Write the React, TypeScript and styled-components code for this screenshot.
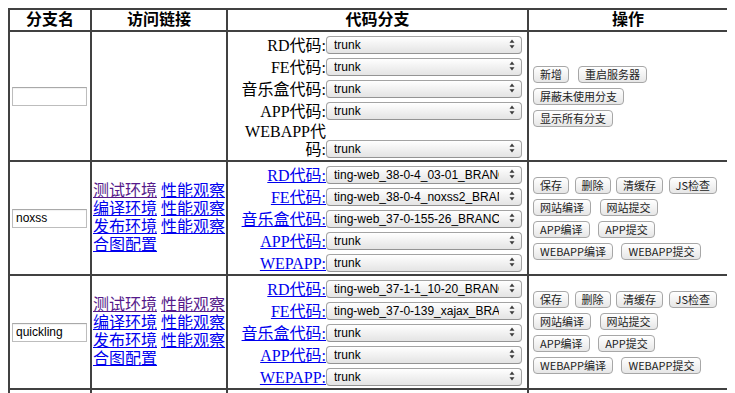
import React from "react";
import styled, { createGlobalStyle } from "styled-components";

const Global = createGlobalStyle`
  body {
    margin: 8px;
    background: #fff;
    color: #000;
    font-family: "Liberation Serif", "Noto Sans CJK SC", serif;
    font-size: 16px;
  }
`;

const Table = styled.table`
  width: 100%;
  border-collapse: collapse;
  table-layout: fixed;
`;

const Col = styled.col<{ $w: number }>`
  width: ${(p) => p.$w}px;
`;

const HeadCell = styled.th`
  border: 2px solid #414141;
  padding: 0;
  font-size: 16px;
  line-height: 20px;
  font-weight: bold;
  text-align: center;
`;

const Cell = styled.td`
  border: 2px solid #414141;
  padding: 1px 0;
  vertical-align: middle;
`;

const NameInput = styled.input`
  box-sizing: border-box;
  width: 75px;
  height: 19px;
  margin: 0 0 0 2px;
  padding: 0 3px;
  border: 1px solid #bdbdbd;
  border-top-color: #a9a9a9;
  box-shadow: inset 0 1px 1px rgba(0, 0, 0, 0.06);
  font: 12px "Liberation Sans", "Noto Sans CJK SC", sans-serif;
  color: #000;
  background: #fff;
  outline: none;
`;

const LinkList = styled.div`
  display: flex;
  flex-direction: column;
  padding-left: 1px;
  font-size: 16px;
  line-height: 18px;
  white-space: nowrap;
`;

const Link = styled.a<{ $visited?: boolean }>`
  color: ${(p) => (p.$visited ? "#551a8b" : "#0000ee")};
  text-decoration: underline;
`;

const Fields = styled.div`
  display: grid;
  grid-template-columns: 86px 196px;
  justify-content: end;
  align-items: end;
  padding-right: 5px;
`;

const FieldLabel = styled.div`
  text-align: right;
  font-size: 16px;
  line-height: 18px;
  padding: 2px 0 0;
`;

const SelectWrap = styled.div`
  position: relative;
  width: 196px;
  height: 18px;
  margin: 2px 0;
`;

const Select = styled.select`
  appearance: none;
  -webkit-appearance: none;
  box-sizing: border-box;
  width: 100%;
  height: 18px;
  margin: 0;
  padding: 0 22px 0 7px;
  border: 1px solid #a3a3a3;
  border-bottom-color: #949494;
  border-radius: 4px;
  background: linear-gradient(#ffffff, #f1f1f1 50%, #e4e4e4);
  font: 12px/16px "Liberation Sans", "Noto Sans CJK SC", sans-serif;
  color: #000;
  outline: none;
`;

const Arrows = styled.svg`
  position: absolute;
  right: 7px;
  top: 4px;
  pointer-events: none;
`;

const Actions = styled.div`
  display: flex;
  flex-direction: column;
  align-items: flex-start;
  gap: 5px;
  padding-left: 4px;
`;

const ActionRow = styled.div<{ $gap: number }>`
  display: flex;
  gap: ${(p) => p.$gap}px;
`;

const Btn = styled.button`
  box-sizing: border-box;
  height: 17px;
  margin: 0;
  padding: 0 6px;
  border: 1px solid #a7a7a7;
  border-radius: 4px;
  background: linear-gradient(#ffffff, #f3f3f3 50%, #e6e6e6);
  font: 11px/15px "Noto Sans CJK SC", sans-serif;
  color: #222;
  white-space: nowrap;
`;

type Field = { label: string; value: string };

const Dropdown: React.FC<{ value: string }> = ({ value }) => (
  <SelectWrap>
    <Select defaultValue={value}>
      <option value={value}>{value}</option>
      {value !== "trunk" && <option value="trunk">trunk</option>}
    </Select>
    <Arrows width="6" height="10" viewBox="0 0 6 10">
      <path d="M3 0.5 L5.5 3.8 L0.5 3.8 Z" fill="#3a3a3a" />
      <path d="M3 9.5 L5.5 6.2 L0.5 6.2 Z" fill="#3a3a3a" />
    </Arrows>
  </SelectWrap>
);

const FieldGrid: React.FC<{ fields: Field[]; linked: boolean }> = ({ fields, linked }) => (
  <Fields>
    {fields.map((f) => (
      <React.Fragment key={f.label}>
        <FieldLabel>{linked ? <Link href="#">{f.label}</Link> : f.label}</FieldLabel>
        <Dropdown value={f.value} />
      </React.Fragment>
    ))}
  </Fields>
);

const Links: React.FC<{ visited: number }> = ({ visited }) => {
  const pairs = [
    ["测试环境", "性能观察"],
    ["编译环境", "性能观察"],
    ["发布环境", "性能观察"],
  ];
  let idx = 0;
  return (
    <LinkList>
      {pairs.map((p, i) => (
        <div key={i}>
          <Link href="#" $visited={idx++ < visited}>{p[0]}</Link>{" "}
          <Link href="#" $visited={idx++ < visited}>{p[1]}</Link>
        </div>
      ))}
      <div>
        <Link href="#">合图配置</Link>
      </div>
    </LinkList>
  );
};

const BranchActions: React.FC = () => (
  <Actions>
    <ActionRow $gap={5.5}>
      <Btn>保存</Btn>
      <Btn>删除</Btn>
      <Btn>清缓存</Btn>
      <Btn>JS检查</Btn>
    </ActionRow>
    <ActionRow $gap={8.5}>
      <Btn>网站编译</Btn>
      <Btn>网站提交</Btn>
    </ActionRow>
    <ActionRow $gap={8.5}>
      <Btn>APP编译</Btn>
      <Btn>APP提交</Btn>
    </ActionRow>
    <ActionRow $gap={8.5}>
      <Btn>WEBAPP编译</Btn>
      <Btn>WEBAPP提交</Btn>
    </ActionRow>
  </Actions>
);

type Branch = { name: string; visited: number; fields: Field[] };

const branches: Branch[] = [
  {
    name: "noxss",
    visited: 1,
    fields: [
      { label: "RD代码:", value: "ting-web_38-0-4_03-01_BRANCH" },
      { label: "FE代码:", value: "ting-web_38-0-4_noxss2_BRANCH" },
      { label: "音乐盒代码:", value: "ting-web_37-0-155-26_BRANCH" },
      { label: "APP代码:", value: "trunk" },
      { label: "WEPAPP:", value: "trunk" },
    ],
  },
  {
    name: "quickling",
    visited: 2,
    fields: [
      { label: "RD代码:", value: "ting-web_37-1-1_10-20_BRANCH" },
      { label: "FE代码:", value: "ting-web_37-0-139_xajax_BRANCH" },
      { label: "音乐盒代码:", value: "trunk" },
      { label: "APP代码:", value: "trunk" },
      { label: "WEPAPP:", value: "trunk" },
    ],
  },
  {
    name: "music",
    visited: 0,
    fields: [
      { label: "RD代码:", value: "trunk" },
      { label: "FE代码:", value: "trunk" },
      { label: "音乐盒代码:", value: "trunk" },
      { label: "APP代码:", value: "trunk" },
      { label: "WEPAPP:", value: "trunk" },
    ],
  },
];

const newFields: Field[] = [
  { label: "RD代码:", value: "trunk" },
  { label: "FE代码:", value: "trunk" },
  { label: "音乐盒代码:", value: "trunk" },
  { label: "APP代码:", value: "trunk" },
  { label: "WEBAPP代码:", value: "trunk" },
];

export default function App() {
  return (
    <>
      <Global />
      <Table>
        <colgroup>
          <Col $w={82} />
          <Col $w={136} />
          <Col $w={301} />
          <Col $w={200} />
        </colgroup>
        <thead>
          <tr>
            <HeadCell>分支名</HeadCell>
            <HeadCell>访问链接</HeadCell>
            <HeadCell>代码分支</HeadCell>
            <HeadCell>操作</HeadCell>
          </tr>
        </thead>
        <tbody>
          <tr>
            <Cell>
              <NameInput defaultValue="" />
            </Cell>
            <Cell />
            <Cell>
              <FieldGrid fields={newFields} linked={false} />
            </Cell>
            <Cell>
              <Actions>
                <ActionRow $gap={9}>
                  <Btn>新增</Btn>
                  <Btn>重启服务器</Btn>
                </ActionRow>
                <ActionRow $gap={9}>
                  <Btn>屏蔽未使用分支</Btn>
                </ActionRow>
                <ActionRow $gap={9}>
                  <Btn>显示所有分支</Btn>
                </ActionRow>
              </Actions>
            </Cell>
          </tr>
          {branches.map((b) => (
            <tr key={b.name}>
              <Cell>
                <NameInput defaultValue={b.name} />
              </Cell>
              <Cell>
                <Links visited={b.visited} />
              </Cell>
              <Cell>
                <FieldGrid fields={b.fields} linked />
              </Cell>
              <Cell>
                <BranchActions />
              </Cell>
            </tr>
          ))}
        </tbody>
      </Table>
    </>
  );
}
